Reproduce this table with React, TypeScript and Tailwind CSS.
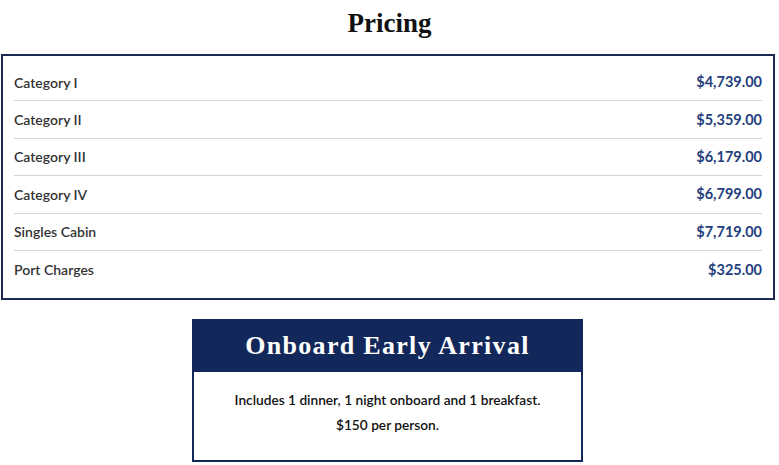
import React from "react";

const rows = [
  ["Category I", "$4,739.00"],
  ["Category II", "$5,359.00"],
  ["Category III", "$6,179.00"],
  ["Category IV", "$6,799.00"],
  ["Singles Cabin", "$7,719.00"],
  ["Port Charges", "$325.00"],
];

export default function App() {
  return (
    <div className="w-[779px] h-[465px] bg-white overflow-hidden" style={{ fontFamily: "Lato, 'Noto Sans', sans-serif" }}>
      <h1
        className="h-[46px] pt-[5px] text-center text-[27px] font-bold text-[#111] leading-[36px]"
        style={{ fontFamily: "'Liberation Serif', 'DejaVu Serif', serif" }}
      >
        Pricing
      </h1>
      <div className="mx-[1px] mt-[8px] w-[774px] h-[246px] border-2 border-[#1c2b55] pt-[8px] px-[11px]">
        {rows.map(([label, price], i) => (
          <div
            key={label}
            className={
              "flex items-center justify-between h-[37.4px] " +
              (i < rows.length - 1 ? "border-b border-[#d4d4d4]" : "")
            }
          >
            <span className="text-[14px] font-semibold text-[#333]">{label}</span>
            <span className="text-[14.5px] font-bold text-[#24407c]">{price}</span>
          </div>
        ))}
      </div>
      <div className="ml-[192px] mt-[19px] w-[391px] border-2 border-[#13285a]">
        <div
          className="h-[51px] pb-[3px] bg-[#13285a] flex items-center justify-center text-white text-[26px] font-bold tracking-[1.3px]"
          style={{ fontFamily: "'Liberation Serif', 'DejaVu Serif', serif" }}
        >
          Onboard Early Arrival
        </div>
        <div className="h-[88px] pb-[8px] flex flex-col items-center justify-center text-[13.7px] font-semibold text-[#111] leading-[25px]">
          <p>Includes 1 dinner, 1 night onboard and 1 breakfast.</p>
          <p>$150 per person.</p>
        </div>
      </div>
    </div>
  );
}
